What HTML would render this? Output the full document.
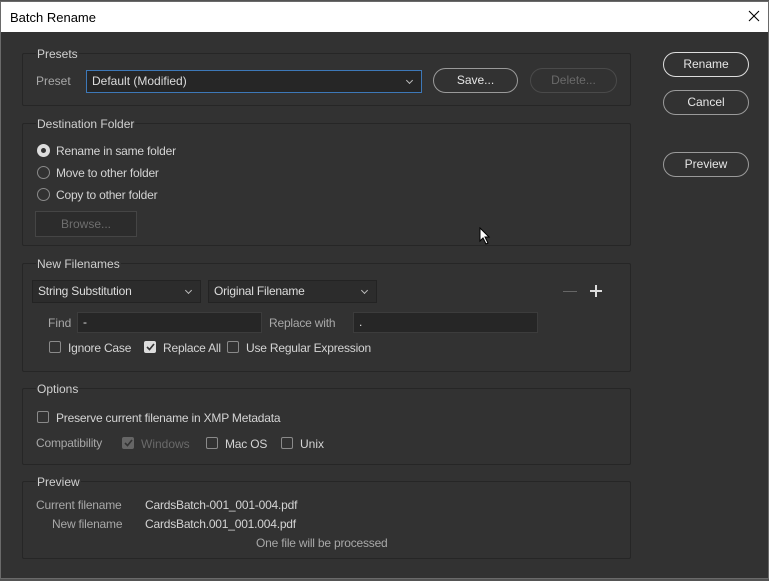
<!DOCTYPE html>
<html><head><style>
*{box-sizing:border-box}
body{margin:0;width:769px;height:581px;background:#535353;font-family:"Liberation Sans",sans-serif;font-size:12px;color:#d4d4d4;position:relative;overflow:hidden}
.dlg{position:absolute;left:0;top:1px;width:769px;height:578px;background:#323232;border:1px solid #6a6a6a}
.title{position:absolute;left:0;top:0;width:767px;height:30px;background:#fff;color:#000;font-size:13px;padding:8px 0 0 9px}
.a{position:absolute;white-space:nowrap}
.g{position:absolute;left:22px;width:609px;border:1px solid #262626;border-radius:2px}
.lg{position:absolute;left:13px;top:-6px;background:#323232;padding:0 1px;color:#d0d0d0;line-height:12px}
.lab{color:#a8a8a8}
.btn{position:absolute;border:1px solid #9a9a9a;border-radius:13px;text-align:center;color:#e6e6e6;line-height:22px}
.sel{position:absolute;background:#2c2c2c;border:1px solid #232323;padding:3px 5px;color:#dcdcdc}
.sel:after{content:"";position:absolute;right:9px;top:7px;width:4px;height:4px;border-right:1px solid #bbb;border-bottom:1px solid #bbb;transform:rotate(45deg)}
.fld{position:absolute;background:#262626;border:1px solid #3c3c3c;height:21px;padding:2px 5px;color:#ddd}
.cb{position:absolute;width:12px;height:12px;border:1px solid #8a8a8a;border-radius:2px}
.rd{position:absolute;width:13px;height:13px;border:1px solid #8a8a8a;border-radius:50%}
.t{letter-spacing:-0.2px}
</style></head><body>
<div class="dlg">
<div class="title">Batch Rename</div>
<svg class="a" style="left:747px;top:8px" width="12" height="12"><path d="M1 1 L11 11 M11 1 L1 11" stroke="#000" stroke-width="1.1"/></svg>
</div>
<div class="g" style="top:53px;height:53px"><span class="lg">Presets</span></div>
<span class="a lab" style="left:36px;top:74px">Preset</span>
<div class="sel" style="left:86px;top:70px;width:336px;height:23px;border-color:#3d78b8;background:#262626">Default (Modified)</div>
<div class="btn" style="left:433px;top:68px;width:85px;height:25px">Save...</div>
<div class="btn" style="left:530px;top:68px;width:87px;height:25px;border-color:#4a4a4a;color:#6a6a6a">Delete...</div>
<div class="btn" style="left:663px;top:52px;width:86px;height:25px;border-color:#ddd">Rename</div>
<div class="btn" style="left:663px;top:90px;width:86px;height:25px">Cancel</div>
<div class="btn" style="left:663px;top:152px;width:86px;height:25px">Preview</div>
<div class="g" style="top:123px;height:123px"><span class="lg">Destination Folder</span></div>
<div class="rd" style="left:37px;top:144px;background:#ddd;border-color:#ddd"><div style="position:absolute;left:3px;top:3px;width:5px;height:5px;border-radius:50%;background:#333"></div></div>
<span class="a t" style="left:56px;top:144px">Rename in same folder</span>
<div class="rd" style="left:37px;top:166px"></div>
<span class="a t" style="left:56px;top:166px">Move to other folder</span>
<div class="rd" style="left:37px;top:188px"></div>
<span class="a t" style="left:56px;top:188px">Copy to other folder</span>
<div class="a" style="left:35px;top:211px;width:102px;height:26px;border:1px solid #454545;background:#2c2c2c;color:#6e6e6e;text-align:center;line-height:24px">Browse...</div>
<svg class="a" style="left:479px;top:227px" width="12" height="18"><path d="M1 1 L1 14 L4 11 L7 17 L9 16 L6 10 L10 10 Z" fill="#fff" stroke="#000"/></svg>
<div class="g" style="top:263px;height:109px"><span class="lg">New Filenames</span></div>
<div class="sel t" style="left:32px;top:280px;width:169px;height:23px">String Substitution</div>
<div class="sel t" style="left:208px;top:280px;width:169px;height:23px">Original Filename</div>
<div class="a" style="left:563px;top:291px;width:14px;height:1px;background:#666"></div>
<div class="a" style="left:590px;top:290px;width:12px;height:2px;background:#ddd"></div>
<div class="a" style="left:595px;top:285px;width:2px;height:12px;background:#ddd"></div>
<span class="a lab" style="left:48px;top:316px">Find</span>
<div class="fld" style="left:77px;top:312px;width:185px">-</div>
<span class="a lab t" style="left:269px;top:316px">Replace with</span>
<div class="fld" style="left:353px;top:312px;width:185px">.</div>
<div class="cb" style="left:49px;top:341px"></div>
<span class="a t" style="left:68px;top:341px">Ignore Case</span>
<div class="cb" style="left:144px;top:341px;background:#ddd;border-color:#ddd"><svg width="10" height="10" style="position:absolute;left:0;top:0"><path d="M2 5 L4.5 7.5 L9 2" stroke="#333" stroke-width="1.6" fill="none"/></svg></div>
<span class="a t" style="left:163px;top:341px">Replace All</span>
<div class="cb" style="left:227px;top:341px"></div>
<span class="a t" style="left:246px;top:341px">Use Regular Expression</span>
<div class="g" style="top:388px;height:77px"><span class="lg">Options</span></div>
<div class="cb" style="left:37px;top:411px"></div>
<span class="a t" style="left:56px;top:411px">Preserve current filename in XMP Metadata</span>
<span class="a lab t" style="left:36px;top:436px">Compatibility</span>
<div class="cb" style="left:122px;top:437px;background:#666;border-color:#666"><svg width="10" height="10" style="position:absolute;left:0;top:0"><path d="M2 5 L4.5 7.5 L9 2" stroke="#333" stroke-width="1.6" fill="none"/></svg></div>
<span class="a" style="left:141px;top:437px;color:#6a6a6a">Windows</span>
<div class="cb" style="left:206px;top:437px"></div>
<span class="a t" style="left:225px;top:437px">Mac OS</span>
<div class="cb" style="left:281px;top:437px"></div>
<span class="a" style="left:300px;top:437px">Unix</span>
<div class="g" style="top:481px;height:78px"><span class="lg">Preview</span></div>
<span class="a lab t" style="left:36px;top:498px">Current filename</span>
<span class="a t" style="left:145px;top:498px">CardsBatch-001_001-004.pdf</span>
<span class="a lab t" style="left:52px;top:517px">New filename</span>
<span class="a t" style="left:145px;top:517px">CardsBatch.001_001.004.pdf</span>
<span class="a lab t" style="left:256px;top:536px">One file will be processed</span>
</body></html>
